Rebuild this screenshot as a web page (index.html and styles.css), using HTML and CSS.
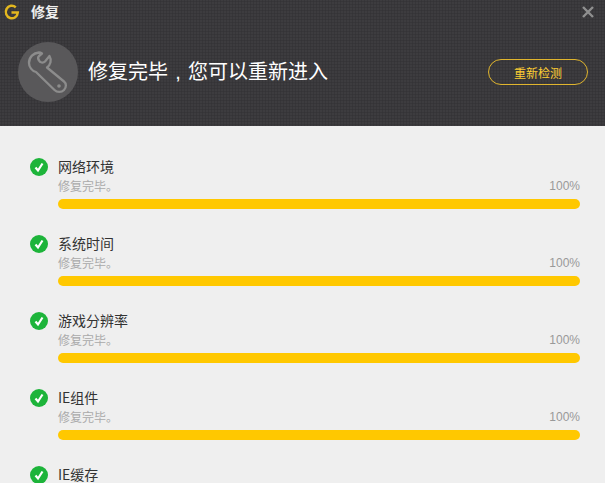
FILE: index.html

```html
<!DOCTYPE html>
<html lang="zh-CN">
<head>
  <meta charset="UTF-8">
  <title>修复</title>
  <link rel="stylesheet" href="styles.css">
</head>
<body>

  <div class="header">
    <div class="titlebar">
      <svg class="logo" width="18" height="18" viewBox="0 0 18 18">
        <path d="M12.800 4.300 A6 6.300 0 1 0 14.800 9.500 H8.500" fill="none" stroke="#e3b71f" stroke-width="2.500"/>
      </svg>
      <span class="title">修复</span>
      <svg class="close" width="12" height="12" viewBox="0 0 12 12">
        <path d="M1 1 L11 11 M11 1 L1 11" stroke="#8f8f8f" stroke-width="2.400"/>
      </svg>
    </div>
    <div class="banner">
      <div class="tool">
        <svg width="60" height="60" viewBox="0 0 60 60">
          <path d="M21 10.500 C15.500 11 11 15 11 21 C11 25 14 29 18 30 L36.500 48 C39 50.500 43.500 50.500 46 48 C48.500 45.500 48.500 41.500 46 39.500 L29 25.500 C32.500 23 34 18 31.500 14 L27 19.500 C25 21.500 22 20.500 21 18.500 C20 17 20 15 21 14 L24 11.500 C23 10.800 22 10.500 21 10.500 Z" fill="none" stroke="#8c8c8c" stroke-width="2.300" stroke-linejoin="round"/>
          <circle cx="41" cy="44" r="1.800" fill="#8c8c8c"/>
        </svg>
      </div>
      <div class="message">修复完毕<span class="comma">,</span>您可以重新进入</div>
      <button class="recheck">重新检测</button>
    </div>
  </div>

  <div class="list">
    <div class="item">
      <svg class="check" width="18" height="18" viewBox="0 0 18 18"><circle cx="9" cy="9" r="9" fill="#1db43a"/><path d="M5.500 9.500 L8 12.500 L12.500 5.500" fill="none" stroke="#fff" stroke-width="2.200"/></svg>
      <div class="info">
        <div class="name">网络环境</div>
        <div class="status"><span>修复完毕。</span><span class="pct">100%</span></div>
        <div class="bar"></div>
      </div>
    </div>
    <div class="item">
      <svg class="check" width="18" height="18" viewBox="0 0 18 18"><circle cx="9" cy="9" r="9" fill="#1db43a"/><path d="M5.500 9.500 L8 12.500 L12.500 5.500" fill="none" stroke="#fff" stroke-width="2.200"/></svg>
      <div class="info">
        <div class="name">系统时间</div>
        <div class="status"><span>修复完毕。</span><span class="pct">100%</span></div>
        <div class="bar"></div>
      </div>
    </div>
    <div class="item">
      <svg class="check" width="18" height="18" viewBox="0 0 18 18"><circle cx="9" cy="9" r="9" fill="#1db43a"/><path d="M5.500 9.500 L8 12.500 L12.500 5.500" fill="none" stroke="#fff" stroke-width="2.200"/></svg>
      <div class="info">
        <div class="name">游戏分辨率</div>
        <div class="status"><span>修复完毕。</span><span class="pct">100%</span></div>
        <div class="bar"></div>
      </div>
    </div>
    <div class="item">
      <svg class="check" width="18" height="18" viewBox="0 0 18 18"><circle cx="9" cy="9" r="9" fill="#1db43a"/><path d="M5.500 9.500 L8 12.500 L12.500 5.500" fill="none" stroke="#fff" stroke-width="2.200"/></svg>
      <div class="info">
        <div class="name">IE组件</div>
        <div class="status"><span>修复完毕。</span><span class="pct">100%</span></div>
        <div class="bar"></div>
      </div>
    </div>
    <div class="item">
      <svg class="check" width="18" height="18" viewBox="0 0 18 18"><circle cx="9" cy="9" r="9" fill="#1db43a"/><path d="M5.500 9.500 L8 12.500 L12.500 5.500" fill="none" stroke="#fff" stroke-width="2.200"/></svg>
      <div class="info">
        <div class="name">IE缓存</div>
      </div>
    </div>
  </div>

</body>
</html>
```

FILE: styles.css

```css
html, body {
  height: 100%;
  overflow: hidden;
}

body {
  margin: 0;
  font-family: "Noto Sans CJK SC", "Liberation Sans", sans-serif;
  background: #efefef;
  color: #333;
}

.header {
  height: 126px;
  background-color: #3d3c3f;
  background-image: radial-gradient(circle at 1.500px 1.500px, #343336 0.9px, transparent 1.200px);
  background-size: 3px 3px;
}

.titlebar {
  height: 24px;
  display: flex;
  align-items: center;
  padding: 0 11px 0 3px;
}

.logo {
  margin-right: 10px;
}

.title {
  color: #eee;
  font-size: 14px;
  line-height: 20px;
  margin-top: -3px;
  font-weight: 700;
  flex: 1;
}

.banner {
  display: flex;
  align-items: center;
  padding: 18px 17px 0 18px;
}

.tool {
  width: 60px;
  height: 60px;
  border-radius: 50%;
  background: #59585a;
  margin-right: 10px;
}

.tool svg {
  display: block;
}

.message {
  flex: 1;
  color: #fff;
  font-size: 20px;
  line-height: 28px;
  margin-top: -1px;
}

.comma {
  display: inline-block;
  width: 20px;
  text-align: center;
  font-family: "Liberation Sans", sans-serif;
}

.recheck {
  width: 100px;
  height: 26px;
  padding: 0;
  background: none;
  border: 1px solid #e0b52e;
  border-radius: 13px;
  color: #ffcf33;
  font-family: inherit;
  font-size: 12px;
}

.list {
  height: 325px;
  overflow: hidden;
  padding: 32px 25px 0 30px;
}

.item {
  display: flex;
  gap: 10px;
  height: 77px;
}

.check {
  flex: none;
}

.info {
  flex: 1;
  margin-top: -1px;
}

.name {
  font-size: 14px;
  line-height: 18px;
  color: #333;
}

.status {
  display: flex;
  justify-content: space-between;
  font-size: 12px;
  line-height: 18px;
  margin-top: 2px;
  color: #aaa;
}

.pct {
  font-family: "Liberation Sans", sans-serif;
  color: #999;
}

.bar {
  height: 10px;
  margin-top: 4px;
  border-radius: 5px;
  background: #ffc800;
}
```
